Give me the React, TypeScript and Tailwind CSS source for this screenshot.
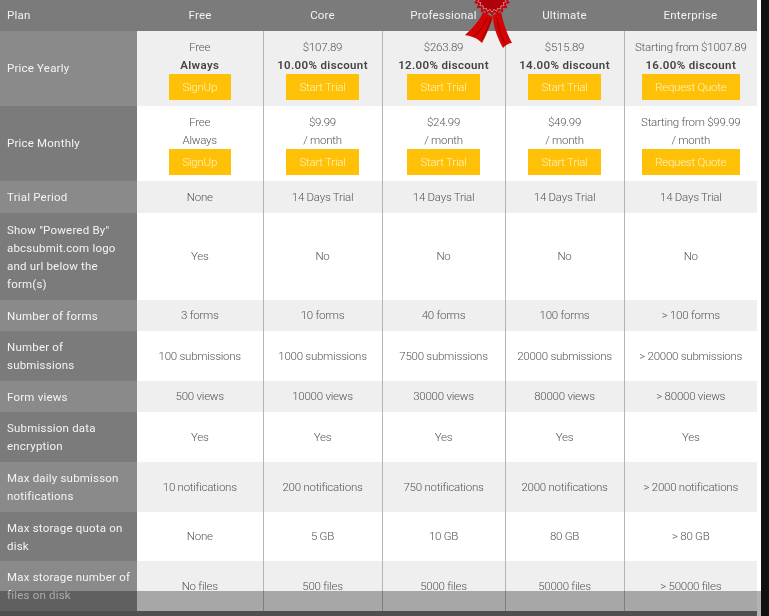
const plans = ["Free", "Core", "Professional", "Ultimate", "Enterprise"];

const yearly = [
  ["Free", "Always", "SignUp"],
  ["$107.89", "10.00% discount", "Start Trial"],
  ["$263.89", "12.00% discount", "Start Trial"],
  ["$515.89", "14.00% discount", "Start Trial"],
  ["Starting from $1007.89", "16.00% discount", "Request Quote"],
];

const monthly = [
  ["Free", "Always", "SignUp"],
  ["$9.99", "/ month", "Start Trial"],
  ["$24.99", "/ month", "Start Trial"],
  ["$49.99", "/ month", "Start Trial"],
  ["Starting from $99.99", "/ month", "Request Quote"],
];

const rows = [
  { label: "Trial Period", h: "h-[32px]", cells: ["None", "14 Days Trial", "14 Days Trial", "14 Days Trial", "14 Days Trial"] },
  { label: 'Show "Powered By" abcsubmit.com logo and url below the form(s)', h: "h-[87px]", cells: ["Yes", "No", "No", "No", "No"] },
  { label: "Number of forms", h: "h-[31px]", cells: ["3 forms", "10 forms", "40 forms", "100 forms", "> 100 forms"] },
  { label: "Number of\nsubmissions", h: "h-[50px]", cells: ["100 submissions", "1000 submissions", "7500 submissions", "20000 submissions", "> 20000 submissions"] },
  { label: "Form views", h: "h-[31px]", cells: ["500 views", "10000 views", "30000 views", "80000 views", "> 80000 views"] },
  { label: "Submission data encryption", h: "h-[50px]", cells: ["Yes", "Yes", "Yes", "Yes", "Yes"] },
  { label: "Max daily submisson notifications", h: "h-[50px]", cells: ["10 notifications", "200 notifications", "750 notifications", "2000 notifications", "> 2000 notifications"] },
  { label: "Max storage quota on disk", h: "h-[49px]", cells: ["None", "5 GB", "10 GB", "80 GB", "> 80 GB"] },
  { label: "Max storage number of files on disk", h: "h-[50px]", cells: ["No files", "500 files", "5000 files", "50000 files", "> 50000 files"] },
];

const cellLine = ["", "border-l border-[#b4b4b6]", "border-l border-[#b4b4b6]", "border-l border-[#b4b4b6]", "border-l border-[#b4b4b6]"];

// rosette with alternating spikes, the top is cut off by the page
function sealPoints(outer: number, inner: number) {
  const pts: string[] = [];
  for (let i = 0; i < 40; i++) {
    const r = i % 2 === 0 ? outer : inner;
    const a = (i * Math.PI) / 20;
    pts.push(`${(30 + r * Math.sin(a)).toFixed(1)},${(-3 + r * Math.cos(a)).toFixed(1)}`);
  }
  return pts.join(" ");
}

function Ribbon() {
  return (
    <svg className="absolute left-[462px] top-0" width="60" height="52" viewBox="0 0 60 52">
      <path d="M21 12 C18 20 10 29 3 35 C8 36 14 37 20 43 C24 36 28 26 31 17 Z" fill="#d40404" />
      <path d="M31 15 C31 24 33 33 41 48 C44 45 47 43 50 43 C45 34 41 22 39 12 Z" fill="#d40404" />
      <path d="M25 18 C22 26 17 32 12 36 M29 19 C26 28 23 34 20 39 M35 18 C36 28 39 36 43 43" stroke="#8f0000" strokeWidth="1" fill="none" />
      <polygon points={sealPoints(19, 15.5)} fill="#c40610" />
      <polygon points={sealPoints(15.5, 13)} fill="#d9a8a0" />
      <polygon points={sealPoints(14.5, 12)} fill="#b0000c" />
    </svg>
  );
}

function PriceCell({ data, bold, i }: { data: string[]; bold: boolean; i: number }) {
  return (
    <td className={`text-center align-top pt-[7px] ${cellLine[i]}`}>
      <div className="leading-[18px]">{data[0]}</div>
      <div className={bold ? "leading-[18px] font-semibold text-[#444] tracking-[0.35px]" : "leading-[18px]"}>{data[1]}</div>
      <div className="flex justify-center">
        <span className="bg-[#ffc107] text-[#fff3c4] h-[26px] w-fit px-[13.5px] pt-[2px] flex items-center">{data[2]}</span>
      </div>
    </td>
  );
}

export default function App() {
  return (
    <div className="relative h-[616px] w-[769px] overflow-hidden bg-[#111111] font-['Roboto',sans-serif] text-[11.5px] text-[#555555] font-light tracking-[-0.25px]">
      <div className="w-[761px] h-[616px] bg-white overflow-hidden blur-[0.35px]">
        <table className="table-fixed border-collapse w-[757px]">
          <colgroup>
            <col className="w-[137px]" />
            <col className="w-[126px]" />
            <col className="w-[119px]" />
            <col className="w-[123px]" />
            <col className="w-[119px]" />
            <col className="w-[133px]" />
          </colgroup>
          <thead>
            <tr className="h-[31px] bg-[#7b7b7b] text-[#f2f2f2] tracking-[0.2px]">
              <th className="text-left pl-[7px] font-normal">Plan</th>
              {plans.map((p) => (
                <th key={p} className="font-normal">{p}</th>
              ))}
            </tr>
          </thead>
          <tbody>
            <tr className="h-[75px] bg-[#efeff0]">
              <td className="bg-[#8a8a8a] text-[#f4f4f4] font-normal pl-[7px] tracking-[0.2px]">Price Yearly</td>
              {yearly.map((d, i) => (
                <PriceCell key={i} data={d} bold i={i} />
              ))}
            </tr>
            <tr className="h-[75px] bg-white">
              <td className="bg-[#7b7b7b] text-[#f4f4f4] font-normal pl-[7px] pt-[1px] tracking-[0.2px]">Price Monthly</td>
              {monthly.map((d, i) => (
                <PriceCell key={i} data={d} bold={false} i={i} />
              ))}
            </tr>
            {rows.map((r, idx) => (
              <tr key={r.label} className={`${r.h} ${idx % 2 === 0 ? "bg-[#efeff0]" : "bg-white"}`}>
                <td className={`${idx % 2 === 0 ? "bg-[#8a8a8a]" : "bg-[#7b7b7b]"} text-[#f4f4f4] font-normal pl-[7px] pr-[4px] leading-[18px] tracking-[0.2px] whitespace-pre-line`}>
                  {r.label}
                </td>
                {r.cells.map((c, i) => (
                  <td key={i} className={`text-center pt-[1px] ${cellLine[i]}`}>{c}</td>
                ))}
              </tr>
            ))}
          </tbody>
        </table>
      </div>
      <Ribbon />
      <div className="absolute left-0 top-[591px] h-[25px] w-[761px] bg-[#000000]/30" />
      <div className="absolute left-0 top-[611px] h-[5px] w-[757px] bg-[#4f4f4f]" />
    </div>
  );
}
